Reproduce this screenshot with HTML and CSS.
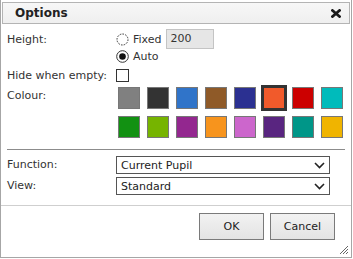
FILE: index.html
```html
<!DOCTYPE html>
<html>
  <head>
    <link rel="stylesheet" href="styles.css">
  </head>
  <body>
    <div class="dialog">
      <div class="titlebar">
        <span class="title">Options</span>
        <svg class="close" width="10" height="9" viewBox="0 0 10 9">
          <path d="M1.5 1.5 L8.5 7.5 M8.5 1.5 L1.5 7.5" stroke="#1a1a1a" stroke-width="2.8" stroke-linecap="square"/>
        </svg>
      </div>

      <div class="content">
        <div class="row">
          <div class="label">Height:</div>
          <div class="field">
            <div class="option fixed">
              <svg class="radio" width="13" height="13" viewBox="0 0 13 13">
                <circle cx="6.5" cy="6.5" r="5.5" fill="#fff" stroke="#333" stroke-width="1" stroke-dasharray="1.6 1.2"/>
              </svg>
              <span>Fixed</span>
              <div class="num">200</div>
            </div>
            <div class="option auto">
              <svg class="radio" width="13" height="13" viewBox="0 0 13 13">
                <circle cx="6.5" cy="6.5" r="5.8" fill="#fff" stroke="#333" stroke-width="1"/>
                <circle cx="6.5" cy="6.5" r="3.3" fill="#111"/>
              </svg>
              <span>Auto</span>
            </div>
          </div>
        </div>

        <div class="row hide-row">
          <div class="label">Hide when empty:</div>
          <div class="field"><span class="checkbox"></span></div>
        </div>

        <div class="row colour-row">
          <div class="label">Colour:</div>
          <div class="swatches">
            <span class="swatch" style="background:#808080"></span>
            <span class="swatch" style="background:#333333"></span>
            <span class="swatch" style="background:#3074c9"></span>
            <span class="swatch" style="background:#8f5a28"></span>
            <span class="swatch" style="background:#2b3091"></span>
            <span class="swatch selected" style="background:#f15a2b"></span>
            <span class="swatch" style="background:#cc0000"></span>
            <span class="swatch" style="background:#00bbbb"></span>
            <span class="swatch" style="background:#129112"></span>
            <span class="swatch" style="background:#76b400"></span>
            <span class="swatch" style="background:#93278f"></span>
            <span class="swatch" style="background:#f7941d"></span>
            <span class="swatch" style="background:#cc66cc"></span>
            <span class="swatch" style="background:#592580"></span>
            <span class="swatch" style="background:#009688"></span>
            <span class="swatch" style="background:#f0b400"></span>
          </div>
        </div>

        <hr class="sep">

        <div class="row sel-row">
          <div class="label">Function:</div>
          <div class="select">
            <span>Current Pupil</span>
            <svg width="11" height="7" viewBox="0 0 11 7"><path d="M1 1 L5.5 5.5 L10 1" fill="none" stroke="#222" stroke-width="1.6"/></svg>
          </div>
        </div>
        <div class="row sel-row">
          <div class="label">View:</div>
          <div class="select">
            <span>Standard</span>
            <svg width="11" height="7" viewBox="0 0 11 7"><path d="M1 1 L5.5 5.5 L10 1" fill="none" stroke="#222" stroke-width="1.6"/></svg>
          </div>
        </div>
      </div>

      <div class="footer">
        <button class="btn">OK</button>
        <button class="btn">Cancel</button>
        <svg class="grip" width="10" height="10" viewBox="0 0 10 10">
          <path d="M9 1 L1 9 M9 4 L4 9 M9 7 L7 9" stroke="#666" stroke-width="1"/>
        </svg>
      </div>
    </div>
  </body>
</html>
```

FILE: styles.css
```css
body {
  margin: 0;
  font-family: "DejaVu Sans", Verdana, sans-serif;
  font-size: 11px;
  color: #333;
  background: #fff;
}

.dialog {
  width: 350px;
  height: 255px;
  padding-top: 2px;
  border: 1px solid #a6a6a6;
  border-top: none;
  position: relative;
}

.titlebar {
  display: flex;
  align-items: center;
  justify-content: space-between;
  height: 20px;
  margin: 0 1px;
  padding: 0 8px 0 12px;
  border: 1px solid #b4b4b4;
  background: linear-gradient(#f7f7f7, #efefef);
}

.title {
  font-weight: bold;
  font-size: 12px;
  color: #222;
}

.close {
  display: block;
}

.content {
  padding: 5px 6px 0 6px;
}

.row {
  display: grid;
  grid-template-columns: 109px 1fr;
}

.label {
  line-height: 13px;
  padding-top: 4px;
}

.option {
  display: flex;
  align-items: center;
  gap: 4px;
}

.option.fixed {
  height: 20px;
}

.option.auto {
  height: 14px;
}

.radio {
  display: block;
}

.num {
  width: 42px;
  height: 18px;
  line-height: 18px;
  padding-left: 4px;
  border: 1px solid #c4c4c4;
  background: #e6e6e6;
  color: #333;
}

.hide-row {
  margin-top: 2px;
  height: 19px;
}

.hide-row .field {
  padding-top: 4px;
}

.checkbox {
  display: block;
  width: 11px;
  height: 11px;
  border: 1px solid #333;
  background: #fff;
}

.colour-row {
  margin-top: 3px;
}

.colour-row .label {
  padding-top: 2px;
}

.swatches {
  display: grid;
  grid-template-columns: repeat(8, 22px);
  gap: 7px;
  padding-left: 2px;
}

.swatch {
  display: block;
  width: 20px;
  height: 20px;
  border: 1px solid #777;
}

.swatch.selected {
  border-color: #333;
  outline: 2px solid #333;
}

.sep {
  margin: 11px 0 6px 0;
  border: none;
  border-top: 1px solid #8c8c8c;
  height: 0;
}

.sel-row {
  margin-bottom: 3px;
}

.sel-row .label {
  padding-top: 2px;
}

.select {
  display: flex;
  align-items: center;
  justify-content: space-between;
  width: 204px;
  height: 16px;
  padding: 0 4px;
  border: 1px solid #555;
  color: #222;
}

.footer {
  display: flex;
  justify-content: flex-end;
  gap: 6px;
  margin-top: 10px;
  padding: 7px 16px 0 0;
  border-top: 1px solid #cfcfcf;
}

.btn {
  width: 65px;
  height: 27px;
  border: 1px solid #7a7a7a;
  background: linear-gradient(#f2f2f2, #e3e3e3);
  font-family: "DejaVu Sans", Verdana, sans-serif;
  font-size: 11px;
  color: #222;
  padding: 0;
}

.grip {
  position: absolute;
  right: 2px;
  bottom: 2px;
}
```
